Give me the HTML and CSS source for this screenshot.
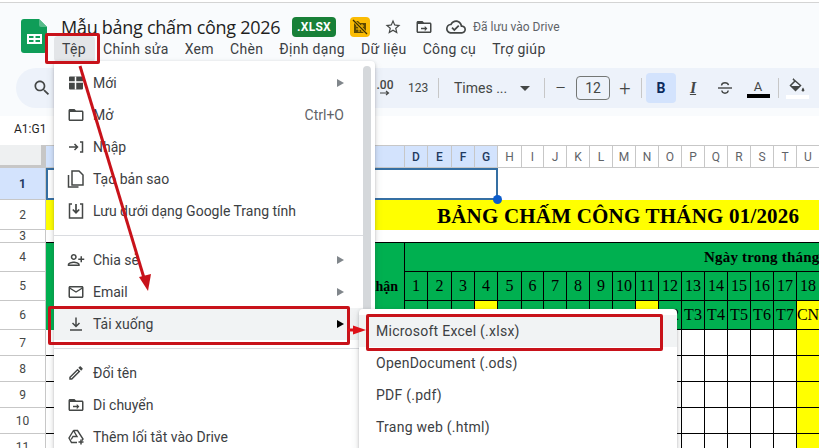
FILE: index.html
```html
<!DOCTYPE html>
<html lang="vi">
<head>
    <meta charset="UTF-8">
    <meta name="viewport" content="width=device-width, initial-scale=1.0">
    <title>Mẫu bảng chấm công 2026</title>
    <link rel="stylesheet" href="styles.css">
</head>
<body>

<header class="topbar">
    <svg class="logo" width="26" height="34" viewBox="0 0 26 34">
        <path d="M3 0h15l8 8v23a3 3 0 0 1-3 3H3a3 3 0 0 1-3-3V3a3 3 0 0 1 3-3z" fill="#0f9d58"/>
        <path d="M18 0l8 8h-6a2 2 0 0 1-2-2z" fill="#57bb8a"/>
        <path d="M6 15h15v10H6z M8 17v2h4.5v-2z M14.500 17v2H19v-2z M8 21v2h4.5v-2z M14.500 21v2H19v-2z" fill="#fff" fill-rule="evenodd"/>
    </svg>
    <div class="docinfo">
        <div class="titlerow">
            <span class="doctitle">Mẫu bảng chấm công 2026</span>
            <span class="badge">.XLSX</span>
            <span class="warnicon">
                <svg width="16" height="16" viewBox="0 0 16 16">
                    <path d="M2 2h4l2 2h6v10H2z" fill="#5f4a00"/>
                    <path d="M4 7h8M4 10h8M7 5v8M10 5v8" stroke="#fbbc04" stroke-width="1"/>
                    <path d="M1 1l14 14" stroke="#fbbc04" stroke-width="3"/>
                    <path d="M1 1l14 14" stroke="#3c3000" stroke-width="1.300"/>
                </svg>
            </span>
            <svg class="staricon" width="18" height="18" viewBox="0 0 24 24"><path d="M22 9.240l-7.190-.620L12 2 9.190 8.630 2 9.240l5.460 4.730L5.820 21 12 17.270 18.180 21l-1.630-7.030L22 9.240zM12 15.400l-3.760 2.270 1-4.280-3.320-2.880 4.380-.380L12 6.100l1.710 4.040 4.380.380-3.320 2.880 1 4.280L12 15.400z" fill="#444746"/></svg>
            <svg class="moveicon" width="18" height="18" viewBox="0 0 24 24"><path d="M20 6h-8l-2-2H4c-1.100 0-1.990.9-1.990 2L2 18c0 1.100.9 2 2 2h16c1.100 0 2-.9 2-2V8c0-1.100-.9-2-2-2zm0 12H4V8h16v10z" fill="#444746"/><path d="M8 13h5v-2.500l3.500 3.500-3.500 3.500V15H8z" fill="#444746"/></svg>
            <svg class="cloudicon" width="20" height="20" viewBox="0 0 24 24"><path d="M19.350 10.040C18.670 6.590 15.640 4 12 4 9.110 4 6.600 5.640 5.350 8.040 2.340 8.360 0 10.910 0 14c0 3.310 2.690 6 6 6h13c2.760 0 5-2.240 5-5 0-2.640-2.050-4.780-4.650-4.960zM19 18H6c-2.210 0-4-1.790-4-4 0-2.050 1.530-3.760 3.560-3.970l1.070-.110.500-.950C8.080 7.140 9.940 6 12 6c2.620 0 4.880 1.860 5.390 4.430l.300 1.500 1.530.110c1.560.1 2.780 1.410 2.780 2.960 0 1.650-1.350 3-3 3zm-9-3.820l-2.090-2.090L6.500 13.500 10 17l6.010-6.010-1.410-1.410z" fill="#444746"/></svg>
            <span class="savedtext">Đã lưu vào Drive</span>
        </div>
        <nav class="menubar">
            <span class="active">Tệp</span>
            <span>Chỉnh sửa</span>
            <span>Xem</span>
            <span>Chèn</span>
            <span>Định dạng</span>
            <span>Dữ liệu</span>
            <span>Công cụ</span>
            <span>Trợ giúp</span>
        </nav>
    </div>
</header>

<div class="toolbar">
    <svg class="tb-search" width="20" height="20" viewBox="0 0 24 24"><path d="M15.500 14h-.790l-.280-.270C15.410 12.590 16 11.110 16 9.500 16 5.910 13.090 3 9.500 3S3 5.910 3 9.500 5.910 16 9.500 16c1.610 0 3.090-.590 4.230-1.570l.270.280v.790l5 4.990L20.490 19l-4.990-5zm-6 0C7.010 14 5 11.990 5 9.500S7.010 5 9.500 5 14 7.010 14 9.500 11.990 14 9.500 14z" fill="#444746"/></svg>
    <span class="tb-gap"></span>
    <span class="tb-dec">.00<svg width="12" height="6" viewBox="0 0 12 6"><path d="M1 3h8M7 1l2.500 2L7 5" fill="none" stroke="#444746" stroke-width="1.200"/></svg></span>
    <span class="tb-num">123</span>
    <span class="tb-sep sep-a"></span>
    <span class="tb-font">Times ...<i class="caret"></i></span>
    <span class="tb-sep sep-b"></span>
    <span class="tb-btn tb-minus">−</span>
    <span class="tb-size">12</span>
    <span class="tb-btn tb-plus">+</span>
    <span class="tb-sep sep-c"></span>
    <span class="tb-btn tb-bold">B</span>
    <span class="tb-btn tb-italic">I</span>
    <span class="tb-btn tb-strike">
        <svg width="18" height="18" viewBox="0 0 18 18"><path d="M2 9h14" stroke="#444746" stroke-width="1.400"/><path d="M5.500 6.500C5.800 4.500 7.200 3.800 9 3.800s3.200.7 3.500 2.400M5.800 11.500c.3 1.800 1.500 2.700 3.200 2.700s3-.9 3.200-2.700" fill="none" stroke="#444746" stroke-width="1.400"/></svg>
    </span>
    <span class="tb-color"><em>A</em><i></i></span>
    <span class="tb-sep sep-d"></span>
    <span class="tb-fill">
        <svg width="18" height="16" viewBox="0 0 18 16"><path d="M5 1l7.500 6.500-5 5-5-5L7 3z" fill="none" stroke="#444746" stroke-width="1.500"/><path d="M3 8h9l-4.500 4.500z" fill="#444746"/><path d="M15 9.500c.8 1.200 1.300 2 1.300 2.700a1.300 1.300 0 0 1-2.600 0c0-.7.5-1.500 1.300-2.700z" fill="#444746"/></svg>
        <i></i>
    </span>
</div>

<div class="formulabar">A1:G1</div>

<main class="sheet">
    <div class="corner"></div>
    <div class="ch on"></div>
    <div class="ch on">D</div><div class="ch on">E</div><div class="ch on">F</div><div class="ch on">G</div>
    <div class="ch">H</div><div class="ch">I</div><div class="ch">J</div><div class="ch">K</div><div class="ch">L</div><div class="ch">M</div><div class="ch">N</div>
    <div class="ch">O</div><div class="ch">P</div><div class="ch">Q</div><div class="ch">R</div><div class="ch">S</div><div class="ch">T</div><div class="ch">U</div>

    <div class="rh on">1</div>
    <div class="selection"><span class="handle"></span></div>
    <div class="rest"></div>

    <div class="rh">2</div>
    <div class="banner">BẢNG CHẤM CÔNG THÁNG 01/2026</div>

    <div class="rh">3</div>
    <div class="spacer"></div>

    <div class="rh">4</div>
    <div class="who">nhận</div>
    <div class="daystitle">Ngày trong tháng</div>

    <div class="rh">5</div>
    <div class="day">1</div><div class="day">2</div><div class="day">3</div><div class="day">4</div><div class="day">5</div><div class="day">6</div>
    <div class="day">7</div><div class="day">8</div><div class="day">9</div><div class="day">10</div><div class="day">11</div><div class="day">12</div>
    <div class="day">13</div><div class="day">14</div><div class="day">15</div><div class="day">16</div><div class="day">17</div><div class="day">18</div>

    <div class="rh">6</div>
    <div class="day">T5</div><div class="day">T6</div><div class="day">T7</div><div class="day sun">CN</div><div class="day">T2</div><div class="day">T3</div>
    <div class="day">T4</div><div class="day">T5</div><div class="day">T6</div><div class="day">T7</div><div class="day sun">CN</div><div class="day">T2</div>
    <div class="day">T3</div><div class="day">T4</div><div class="day">T5</div><div class="day">T6</div><div class="day">T7</div><div class="day sun">CN</div>

    <div class="rh">7</div><div class="c"></div><div class="c wide"></div><div class="c"></div><div class="c"></div><div class="c"></div><div class="c"></div><div class="c"></div><div class="c off"></div>
    <div class="rh">8</div><div class="c"></div><div class="c wide"></div><div class="c"></div><div class="c"></div><div class="c"></div><div class="c"></div><div class="c"></div><div class="c off"></div>
    <div class="rh">9</div><div class="c"></div><div class="c wide"></div><div class="c"></div><div class="c"></div><div class="c"></div><div class="c"></div><div class="c"></div><div class="c off"></div>
    <div class="rh">10</div><div class="c"></div><div class="c wide"></div><div class="c"></div><div class="c"></div><div class="c"></div><div class="c"></div><div class="c"></div><div class="c off"></div>
    <div class="rh">11</div><div class="c"></div><div class="c wide"></div><div class="c"></div><div class="c"></div><div class="c"></div><div class="c"></div><div class="c"></div><div class="c off"></div>
</main>

<!-- File menu -->
<div class="menu filemenu">
    <div class="item">
        <svg width="18" height="18" viewBox="0 0 18 18"><path d="M3 2.500h12a1 1 0 0 1 1 1v11a1 1 0 0 1-1 1H3a1 1 0 0 1-1-1v-11a1 1 0 0 1 1-1z" fill="#444746"/><path d="M2 8h14M8.500 2.500v13" stroke="#fff" stroke-width="1.500"/></svg>
        <span>Mới</span><i class="arrow"></i>
    </div>
    <div class="item">
        <svg width="18" height="18" viewBox="0 0 24 24"><path d="M20 6h-8l-2-2H4c-1.100 0-1.990.9-1.990 2L2 18c0 1.100.9 2 2 2h16c1.100 0 2-.9 2-2V8c0-1.100-.9-2-2-2zm0 12H4V8h16v10z" fill="#444746"/></svg>
        <span>Mở</span><b class="shortcut">Ctrl+O</b>
    </div>
    <div class="item">
        <svg width="18" height="18" viewBox="0 0 18 18"><path d="M2 9h8M7.500 6L10.500 9l-3 3M13 4h2.500v10H13" fill="none" stroke="#444746" stroke-width="1.500"/></svg>
        <span>Nhập</span>
    </div>
    <div class="item">
        <svg width="18" height="20" viewBox="0 0 18 20"><path d="M1.500 6v12h10" fill="none" stroke="#444746" stroke-width="1.500"/><path d="M5 2h7l4 4v10H5z" fill="none" stroke="#444746" stroke-width="1.500"/></svg>
        <span>Tạo bản sao</span>
    </div>
    <div class="item">
        <svg width="18" height="18" viewBox="0 0 18 18"><path d="M5 2H2.500v14h13V2H13" fill="none" stroke="#444746" stroke-width="1.500"/><path d="M9 2v8M5.800 7.500L9 10.700l3.200-3.200" fill="none" stroke="#444746" stroke-width="1.700"/></svg>
        <span>Lưu dưới dạng Google Trang tính</span>
    </div>
    <div class="sep"></div>
    <div class="item">
        <svg width="18" height="18" viewBox="0 0 24 24"><g transform="matrix(-1 0 0 1 24 0)"><path d="M15 12c2.210 0 4-1.790 4-4s-1.790-4-4-4-4 1.790-4 4 1.790 4 4 4zm0-6c1.100 0 2 .9 2 2s-.9 2-2 2-2-.9-2-2 .9-2 2-2zm0 8c-2.670 0-8 1.340-8 4v2h16v-2c0-2.660-5.330-4-8-4zm-6 4c.220-.720 3.310-2 6-2 2.700 0 5.800 1.290 6 2H9zm-3-3v-3h3v-2H6V7H4v3H1v2h3v3h2z" fill="#444746"/></g></svg>
        <span>Chia sẻ</span><i class="arrow"></i>
    </div>
    <div class="item">
        <svg width="18" height="18" viewBox="0 0 24 24"><path d="M20 4H4c-1.100 0-1.990.9-1.990 2L2 18c0 1.100.9 2 2 2h16c1.100 0 2-.9 2-2V6c0-1.100-.9-2-2-2zm0 14H4V8l8 5 8-5v10zm-8-7L4 6h16l-8 5z" fill="#444746"/></svg>
        <span>Email</span><i class="arrow"></i>
    </div>
    <div class="item hover">
        <svg width="18" height="18" viewBox="0 0 18 18"><path d="M9 2.500v8.500M5.500 8L9 11.500 12.500 8M3 15h12" fill="none" stroke="#444746" stroke-width="1.500"/></svg>
        <span>Tải xuống</span><i class="arrow dark"></i>
    </div>
    <div class="sep"></div>
    <div class="item">
        <svg width="18" height="18" viewBox="0 0 24 24"><path d="M3 17.250V21h3.750L17.810 9.940l-3.750-3.750L3 17.250zM5.920 19H5v-.920l9.060-9.060.920.920L5.920 19zM20.710 5.630l-2.340-2.340c-.2-.2-.450-.290-.710-.290s-.510.1-.7.290l-1.830 1.830 3.750 3.750 1.830-1.830c.390-.390.390-1.020 0-1.410z" fill="#444746"/></svg>
        <span>Đổi tên</span>
    </div>
    <div class="item">
        <svg width="18" height="18" viewBox="0 0 24 24"><path d="M20 6h-8l-2-2H4c-1.100 0-1.990.9-1.990 2L2 18c0 1.100.9 2 2 2h16c1.100 0 2-.9 2-2V8c0-1.100-.9-2-2-2zm0 12H4V8h16v10z" fill="#444746"/><path d="M8 13h5v-2.500l3.500 3.500-3.500 3.500V15H8z" fill="#444746"/></svg>
        <span>Di chuyển</span>
    </div>
    <div class="item">
        <svg width="18" height="18" viewBox="0 0 18 18"><path d="M6.500 2.500h4L16 11l-1 1.500M6.500 2.500L2 10l2.500 4.500H10M6.500 2.500L10 8.500H6l-1.800 3" fill="none" stroke="#444746" stroke-width="1.400"/><path d="M14 11.500v5M11.500 14h5" stroke="#444746" stroke-width="1.500"/></svg>
        <span>Thêm lối tắt vào Drive</span>
    </div>
    <div class="scrollthumb"></div>
</div>

<!-- Download submenu -->
<div class="menu submenu">
    <div class="item hover">Microsoft Excel (.xlsx)</div>
    <div class="item">OpenDocument (.ods)</div>
    <div class="item">PDF (.pdf)</div>
    <div class="item">Trang web (.html)</div>
</div>

<!-- red marks drawn over the screenshot -->
<div class="mark mark-file"></div>
<div class="mark mark-download"></div>
<div class="mark mark-excel"></div>
<svg class="arrows" width="819" height="448" viewBox="0 0 819 448">
    <path d="M80 66L144 278" stroke="#c8121a" stroke-width="3" fill="none"/>
    <path d="M148 291L139 277 151 274z" fill="#c8121a"/>
    <path d="M348 330H355" stroke="#dd1118" stroke-width="3" fill="none"/>
    <path d="M366 330L353 325.500V334.500z" fill="#dd1118"/>
</svg>

</body>
</html>
```

FILE: styles.css
```css
* {
    box-sizing: border-box;
}
html {
    margin: 0;
    padding: 0;
    background-color: #fff;
}
body {
    position: relative;
    width: 819px;
    height: 446px;
    margin: 2px 0 0;
    padding: 0;
    overflow: hidden;
    background-color: #f9fbfd;
    font-family: Roboto, "Noto Sans", sans-serif;
    color: #444746;
    border-top: 1px solid #d4d4d4;
}

/* top bar */
.topbar {
    display: flex;
    height: 65px;
    padding: 16px 0 0 21px;
}
.logo {
    flex: none;
}
.docinfo {
    margin-left: 14px;
}
.titlerow {
    display: flex;
    align-items: center;
    height: 20px;
    margin-top: -2px;
}
.doctitle {
    font-family: "Open Sans", sans-serif;
    font-size: 18px;
    letter-spacing: -0.27px;
    color: #1f1f1f;
    width: 231px;
    white-space: nowrap;
}
.badge {
    width: 44px;
    height: 20px;
    line-height: 20px;
    text-align: center;
    background-color: #188038;
    color: #fff;
    font-size: 12px;
    font-weight: 700;
    border-radius: 4px;
    letter-spacing: 0.3px;
}
.warnicon {
    display: flex;
    align-items: center;
    justify-content: center;
    width: 20px;
    height: 20px;
    margin-left: 14px;
    background-color: #fbbc04;
    border-radius: 4px;
}
.staricon {
    margin-left: 14px;
}
.moveicon {
    margin-left: 13px;
}
.cloudicon {
    margin-left: 13px;
}
.savedtext {
    margin-left: 7px;
    font-size: 12px;
    color: #5f6368;
    white-space: nowrap;
}
.menubar {
    display: flex;
    margin: -1px 0 0 -7px;
    font-size: 14px;
    letter-spacing: 0.33px;
    color: #3c4043;
}
.menubar span {
    padding: 0 8px;
    height: 26px;
    line-height: 26px;
    white-space: nowrap;
}
.menubar .active {
    padding-right: 9px;
    background-color: #e3e5e8;
    border-radius: 4px;
}

/* toolbar */
.toolbar {
    display: flex;
    align-items: center;
    height: 40px;
    margin-left: 16px;
    background-color: #edf2fa;
    border-radius: 20px 0 0 20px;
    font-size: 13px;
}
.tb-search {
    margin-left: 16px;
}
.tb-gap {
    width: 323px;
}
.tb-dec {
    display: flex;
    flex-direction: column;
    align-items: center;
    width: 20px;
    font-size: 12px;
    font-weight: 500;
    line-height: 10px;
}
.tb-num {
    width: 20px;
    margin-left: 13px;
    font-size: 12px;
    text-align: center;
}
.tb-sep {
    width: 1px;
    height: 20px;
    background-color: #c7c7c7;
}
.sep-a {
    margin-left: 10px;
}
.sep-b {
    margin-left: 14px;
}
.sep-c {
    margin-left: 1px;
}
.sep-d {
    margin-left: 2px;
}
.tb-font {
    display: flex;
    align-items: center;
    justify-content: space-between;
    width: 76px;
    margin-left: 15px;
    font-size: 14px;
}
.caret {
    border-top: 5px solid #444746;
    border-left: 5px solid transparent;
    border-right: 5px solid transparent;
}
.tb-btn {
    display: flex;
    align-items: center;
    justify-content: center;
    height: 30px;
    width: 30px;
}
.tb-minus {
    width: 31px;
    font-size: 20px;
    font-weight: 300;
}
.tb-plus {
    font-size: 20px;
    font-weight: 300;
}
.tb-size {
    width: 34px;
    height: 24px;
    line-height: 22px;
    text-align: center;
    border: 1px solid #747775;
    border-radius: 4px;
    font-size: 14px;
}
.tb-bold {
    margin-left: 4px;
    background-color: #d3e3fd;
    border-radius: 4px;
    font-size: 14px;
    font-weight: 700;
    color: #0b2a5c;
}
.tb-italic {
    width: 34px;
    font-family: "Liberation Serif", serif;
    font-style: italic;
    font-size: 16px;
    font-weight: 700;
    text-decoration: underline;
    text-underline-offset: 1px;
}
.tb-color {
    display: flex;
    flex-direction: column;
    align-items: center;
    width: 36px;
}
.tb-color em {
    font-style: normal;
    font-size: 13px;
    line-height: 15px;
}
.tb-color i {
    width: 23px;
    height: 4px;
    background-color: #000;
}
.tb-fill {
    display: flex;
    flex-direction: column;
    align-items: center;
    width: 24px;
    margin-left: 6px;
}
.tb-fill i {
    width: 23px;
    height: 4px;
    margin-top: 1px;
    background-color: #fff;
}

/* name box */
.formulabar {
    height: 29px;
    margin-top: 8px;
    padding: 5px 0 0 14px;
    font-size: 12px;
    line-height: 16px;
    color: #1f1f1f;
    background-color: #fff;
}

/* sheet */
.sheet {
    display: grid;
    grid-template-columns: 46px 359px 23px 24px 23px 23px 24px 22px repeat(12, 23px);
    grid-template-rows: 23px 32px 30px 13px 29px 29px 29px 26px 26px 26px 26px 26px;
    background-color: #fff;
}
.corner {
    background-color: #eef0f1;
    border-right: 5px solid #c7c7c7;
    border-bottom: 3px solid #c7c7c7;
}
.ch {
    display: flex;
    align-items: center;
    justify-content: center;
    font-size: 12px;
    color: #5f6368;
    background-color: #fff;
    border-top: 1px solid #c7c7c7;
    border-right: 1px solid #c7c7c7;
    border-bottom: 1px solid #c7c7c7;
}
.ch.on {
    background-color: #d3e3fd;
    color: #1f3a5f;
    font-weight: 500;
}
.rh {
    display: flex;
    align-items: center;
    justify-content: center;
    font-size: 12px;
    color: #444746;
    background-color: #fff;
    border-right: 1px solid #c7c7c7;
    border-bottom: 1px solid #c7c7c7;
}
.rh.on {
    background-color: #d3e3fd;
    color: #1f3a5f;
    font-weight: 700;
}
.selection {
    position: relative;
    grid-column: span 5;
    border: 2px solid #356fa3;
}
.handle {
    position: absolute;
    right: -6px;
    bottom: -6px;
    width: 9px;
    height: 9px;
    border-radius: 50%;
    background-color: #0b5ccc;
}
.rest {
    grid-column: span 14;
}
.banner {
    grid-column: span 19;
    padding-left: 391px;
    font-family: "Liberation Serif", serif;
    font-size: 21px;
    font-weight: 700;
    letter-spacing: 0.2px;
    line-height: 32px;
    color: #000;
    white-space: nowrap;
    overflow: hidden;
    background-color: #ffff00;
}
.spacer {
    grid-column: span 19;
    border-bottom: 1px solid #000;
}
.who {
    grid-row: span 3;
    display: flex;
    align-items: center;
    justify-content: flex-end;
    padding-right: 6px;
    font-family: "Liberation Serif", serif;
    font-size: 14px;
    font-weight: 700;
    color: #000;
    background-color: #00b050;
    border-right: 1px solid #000;
}
.daystitle {
    grid-column: span 18;
    padding-left: 299px;
    font-family: "Liberation Serif", serif;
    font-size: 15px;
    font-weight: 700;
    letter-spacing: 0.2px;
    line-height: 29px;
    color: #000;
    white-space: nowrap;
    overflow: hidden;
    background-color: #00b050;
    border-bottom: 1px solid #000;
}
.day {
    display: flex;
    align-items: center;
    justify-content: center;
    font-family: "Liberation Serif", serif;
    font-size: 16px;
    color: #000;
    background-color: #00b050;
    border-right: 1px solid #000;
    border-bottom: 1px solid #000;
    white-space: nowrap;
}
.day.sun {
    background-color: #ffff00;
}
.c {
    border-right: 1px solid #000;
    border-bottom: 1px solid #000;
}
.c.wide {
    grid-column: span 12;
}
.c.off {
    background-color: #ffff00;
}

/* menus */
.menu {
    position: absolute;
    background-color: #fff;
    border-radius: 4px 4px 0 0;
    box-shadow: 0 1px 3px rgba(60, 64, 67, 0.3), 0 4px 8px rgba(60, 64, 67, 0.15);
    font-size: 14px;
    color: #3c4043;
    overflow: hidden;
}
.filemenu {
    left: 54px;
    top: 58px;
    width: 321px;
    height: 390px;
    padding: 6px 12px 0 0;
}
.submenu {
    left: 359px;
    top: 306px;
    width: 318px;
    height: 142px;
    padding-top: 6px;
    letter-spacing: 0.25px;
}
.item {
    display: flex;
    align-items: center;
    height: 32px;
    padding: 0 19px 0 13px;
    white-space: nowrap;
}
.item svg {
    flex: none;
    width: 18px;
    margin-right: 8px;
}
.submenu .item {
    padding-left: 17px;
}
.item.hover {
    background-color: #f1f3f4;
}
.arrow {
    margin-left: auto;
    border-left: 7px solid #80868b;
    border-top: 4px solid transparent;
    border-bottom: 4px solid transparent;
}
.arrow.dark {
    border-left-color: #000;
}
.shortcut {
    margin-left: auto;
    font-weight: 400;
    color: #5f6368;
}
.sep {
    height: 17px;
    position: relative;
}
.sep::after {
    content: "";
    position: absolute;
    left: 0;
    right: 0;
    top: 8px;
    border-top: 1px solid #dadce0;
}
.scrollthumb {
    position: absolute;
    right: 4px;
    top: 5px;
    bottom: 0;
    width: 8px;
    background-color: #d5d8db;
    border-radius: 4px 4px 0 0;
}

/* red marks */
.mark {
    position: absolute;
    border: 3px solid #c8121a;
    border-radius: 2px;
}
.mark-file {
    left: 45px;
    top: 30px;
    width: 55px;
    height: 31px;
}
.mark-download {
    left: 48px;
    top: 303px;
    width: 302px;
    height: 39px;
}
.mark-excel {
    left: 366px;
    top: 311px;
    width: 297px;
    height: 37px;
}
.arrows {
    position: absolute;
    left: 0;
    top: -3px;
}
```
